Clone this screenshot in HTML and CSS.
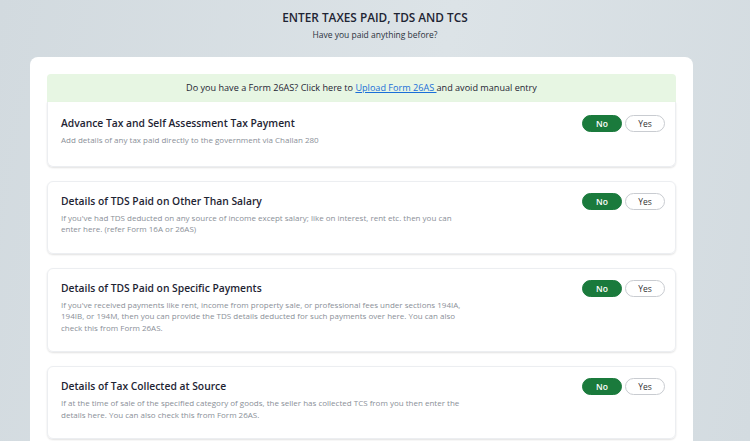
FILE: index.html
```html
<!DOCTYPE HTML>
<html>

<head>
    <meta charset="utf-8">

    <link rel="stylesheet" href="styles.css">

</head>

<body>

<div class="page-head">
    <h1>ENTER TAXES PAID, TDS AND TCS</h1>
    <p>Have you paid anything before?</p>
</div>

<div class="sheet">

    <div class="banner">
        Do you have a Form 26AS? Click here to <a href="#">Upload Form 26AS </a> and avoid manual entry
    </div>

    <div class="tax-card first">
        <div class="info">
            <h2>Advance Tax and Self Assessment Tax Payment</h2>
            <p>Add details of any tax paid directly to the government via Challan 280</p>
        </div>
        <div class="choice">
            <button class="on">No</button>
            <button>Yes</button>
        </div>
    </div>

    <div class="tax-card">
        <div class="info">
            <h2>Details of TDS Paid on Other Than Salary</h2>
            <p>If you've had TDS deducted on any source of income except salary; like on interest, rent etc. then you can enter here. (refer Form 16A or 26AS)</p>
        </div>
        <div class="choice">
            <button class="on">No</button>
            <button>Yes</button>
        </div>
    </div>

    <div class="tax-card">
        <div class="info">
            <h2>Details of TDS Paid on Specific Payments</h2>
            <p>If you've received payments like rent, income from property sale, or professional fees under sections 194IA, 194IB, or 194M, then you can provide the TDS details deducted for such payments over here. You can also check this from Form 26AS.</p>
        </div>
        <div class="choice">
            <button class="on">No</button>
            <button>Yes</button>
        </div>
    </div>

    <div class="tax-card">
        <div class="info">
            <h2>Details of Tax Collected at Source</h2>
            <p>If at the time of sale of the specified category of goods, the seller has collected TCS from you then enter the details here. You can also check this from Form 26AS.</p>
        </div>
        <div class="choice">
            <button class="on">No</button>
            <button>Yes</button>
        </div>
    </div>

</div>

</body>

</html>
```

FILE: styles.css
```css
/* общие стили */

html, body {
    height: 100%;
}

body {
    margin: 0;
    overflow: hidden;
    font-family: "Open Sans", "DejaVu Sans", sans-serif;
    color: #1e2433;
    background: linear-gradient(100deg, #d2dadf 0%, #dce3e7 55%, #d3dbe0 100%);
}

.page-head {
    text-align: center;
    padding-top: 9px;
}

.page-head h1 {
    margin: 0;
    font-size: 11.8px;
    font-weight: 600;
    line-height: 17px;
}

.page-head p {
    margin: 2px 0 0;
    font-size: 8.5px;
    line-height: 13px;
    color: #2c3340;
}

.sheet {
    width: 663px;
    margin: 16px 0 0 30px;
    padding: 17px 17px 20px;
    box-sizing: border-box;
    background: #fff;
    border-radius: 8px;
}

.banner {
    background: #e7f6e3;
    border-radius: 4px 4px 0 0;
    text-align: center;
    font-size: 9.1px;
    line-height: 28px;
    color: #1e2433;
}

.banner a {
    color: #1a6ed8;
}

.tax-card {
    display: flex;
    justify-content: space-between;
    align-items: flex-start;
    padding: 11px 10px 18px 13px;
    margin-top: 14px;
    border: 1px solid #eceef1;
    border-radius: 6px;
    box-shadow: 0 1px 2px rgba(0, 0, 0, 0.12);
}

.tax-card.first {
    margin-top: 0;
    border-top: none;
    border-radius: 0 0 6px 6px;
    padding-top: 13px;
    padding-bottom: 20px;
}

.info h2 {
    margin: 0;
    font-size: 10.3px;
    font-weight: 600;
    line-height: 16px;
}

.info p {
    margin: 3px 0 0;
    max-width: 405px;
    font-size: 8px;
    line-height: 11.5px;
    color: #8a8f98;
}

.choice {
    display: flex;
    gap: 3px;
}

.choice button {
    width: 40px;
    height: 17px;
    padding: 0;
    border: 1px solid #c9ccd1;
    border-radius: 9px;
    background: #fff;
    font-family: inherit;
    font-size: 8.5px;
    color: #333;
}

.choice button.on {
    background: #1a7a3c;
    border-color: #1a7a3c;
    color: #fff;
    font-weight: 600;
}
```
